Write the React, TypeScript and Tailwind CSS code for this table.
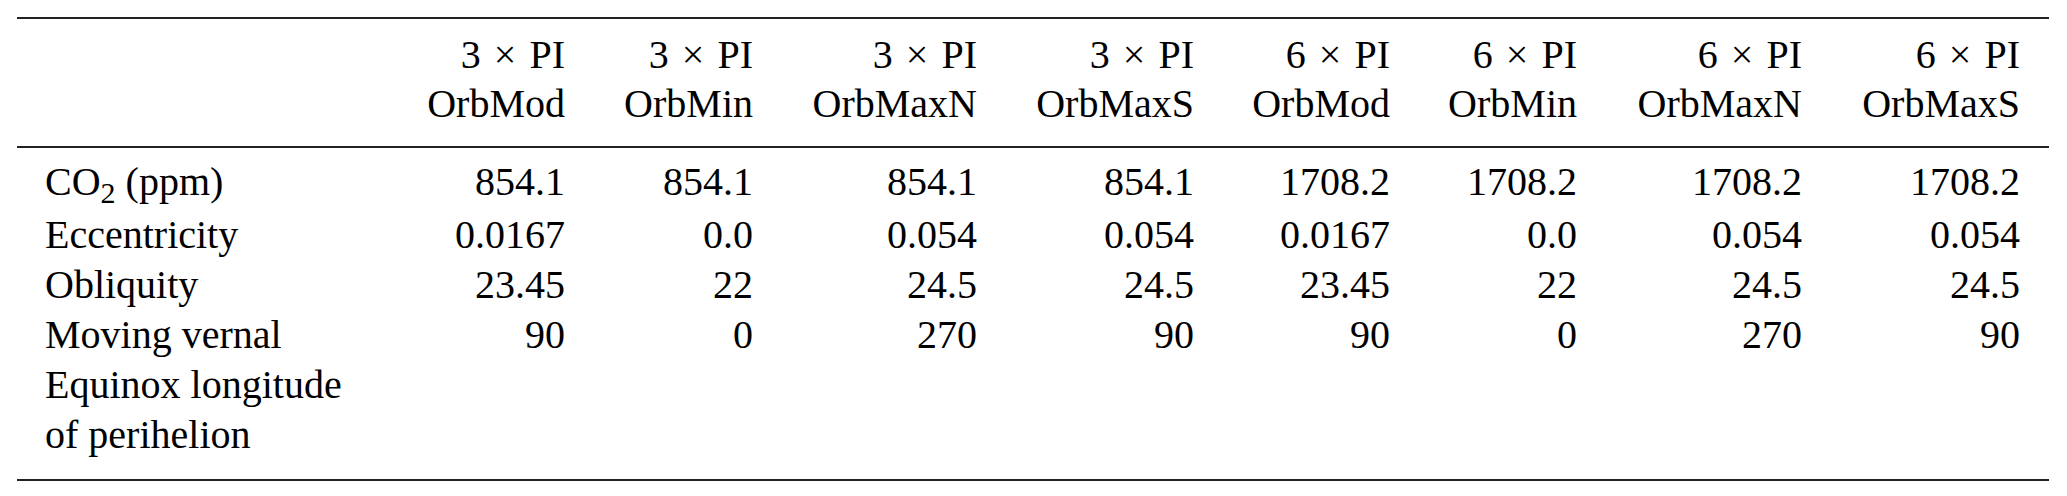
import React from "react";

const columns = [
  { factor: "3", orbit: "OrbMod" },
  { factor: "3", orbit: "OrbMin" },
  { factor: "3", orbit: "OrbMaxN" },
  { factor: "3", orbit: "OrbMaxS" },
  { factor: "6", orbit: "OrbMod" },
  { factor: "6", orbit: "OrbMin" },
  { factor: "6", orbit: "OrbMaxN" },
  { factor: "6", orbit: "OrbMaxS" },
];

const rows: { label: React.ReactNode; values: string[] }[] = [
  {
    label: (
      <>
        CO<span className="relative top-[8px] text-[30px]">2</span> (ppm)
      </>
    ),
    values: ["854.1", "854.1", "854.1", "854.1", "1708.2", "1708.2", "1708.2", "1708.2"],
  },
  {
    label: "Eccentricity",
    values: ["0.0167", "0.0", "0.054", "0.054", "0.0167", "0.0", "0.054", "0.054"],
  },
  {
    label: "Obliquity",
    values: ["23.45", "22", "24.5", "24.5", "23.45", "22", "24.5", "24.5"],
  },
  {
    label: "Moving vernal Equinox longitude of perihelion",
    values: ["90", "0", "270", "90", "90", "0", "270", "90"],
  },
];

// label column + 8 value columns, widths measured so right edges line up
const grid =
  "grid grid-cols-[322px_198px_188px_224px_217px_196px_187px_225px_218px]";

export default function App() {
  return (
    <div
      className="w-[2067px] h-[496px] bg-white text-black pl-[17px] pt-[17px] text-[40px]"
      style={{ fontFamily: '"Liberation Serif", "Times New Roman", serif' }}
    >
      <div className="w-[2032px] border-t-2 border-[#222]">
        {/* header */}
        <div className={`${grid} pl-[28px] pt-[11px] pb-[18px] leading-[49px] border-b-2 border-[#222]`}>
          <div />
          {columns.map((c, i) => (
            <div key={i} className="text-right whitespace-nowrap">
              <div>
                {c.factor}
                <span className="mx-[13px]">×</span>
                PI
              </div>
              <div>{c.orbit}</div>
            </div>
          ))}
        </div>

        {/* body */}
        <div className="pl-[28px] pt-[9px] pb-[19px] leading-[50px] border-b-2 border-[#222]">
          {rows.map((r, i) => (
            <div key={i} className={grid}>
              <div className="max-w-[300px]">{r.label}</div>
              {r.values.map((v, j) => (
                <div key={j} className="text-right whitespace-nowrap">
                  {v}
                </div>
              ))}
            </div>
          ))}
        </div>
      </div>
    </div>
  );
}
